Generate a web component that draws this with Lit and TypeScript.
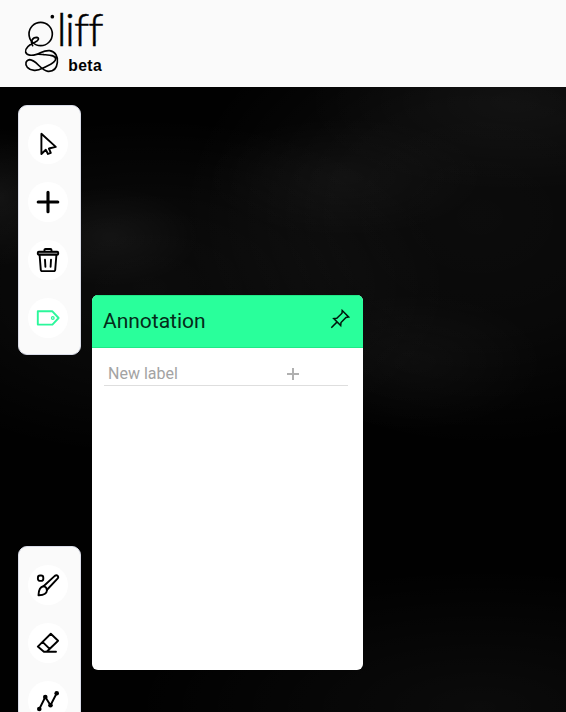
import { LitElement, html, css, svg } from "lit";
import { customElement } from "lit/decorators.js";

const icons = {
  select: svg`<path d="M5.4 1.8V22l4.4-4.2 2.2 4.2 2.8-1.2-1.9-4.3 6.9-1.6z" />`,
  add: svg`<path d="M2.2 12h19.6M12 2.2v19.6" stroke-width="3.1" />`,
  trash: svg`<path d="M8.5 3.5V1.9q0-.9 1-.9h5q1 0 1 .9v1.6" />
    <rect x="1.8" y="3.8" width="20.4" height="2.9" rx="1" fill="#999" />
    <path d="M3.6 7l1.2 14.8q.2 1.4 1.5 1.4h11.4q1.3 0 1.5-1.4L20.4 7" />
    <path d="M9 11.8l.4 7M15 11.8l-.4 7" />`,
  tag: svg`<path d="M1.8 5.3h14.6l6.2 6.7-6.2 6.6H1.8z" /><circle cx="16.8" cy="12" r="1.3" stroke-width="1.3" />`,
  brush: svg`<rect x="1.9" y="2.5" width="5.4" height="5.4" rx="2.2" />
    <path d="M7.5 13.2L18.8 2.9q1.7-1.2 2.9 0 1.1 1.4-.2 2.8L10.8 17" />
    <path d="M7.5 13.2q3 .8 3.6 3.8-.6 5.4-8.6 5.2Q2.7 14 7.5 13.2z" />`,
  eraser: svg`<path d="M14.8 2.8l7.3 6.9-11.4 11H7.9l-6.1-5.1zM6.5 10.8l6.9 6.9M7.9 20.8H20" />`,
  spline: svg`<path d="M3.3 20L9.3 8l5.2 8.3 6.2-12" />
    <g fill="currentColor" stroke="none"><circle cx="3.3" cy="20" r="2.3" /><circle cx="9.3" cy="8" r="2.3" />
    <circle cx="14.5" cy="16.3" r="2.3" /><circle cx="20.7" cy="4.3" r="2.3" /></g>`,
};

type IconName = keyof typeof icons;

@customElement("app-root")
export class AppRoot extends LitElement {
  static styles = css`
    :host {
      display: flex;
      flex-direction: column;
      width: 100%;
      height: 100vh;
      overflow: hidden;
      font-family: Roboto, sans-serif;
    }
    .header { flex: 0 0 87px; background: #fafafa; }
    .logo { display: block; width: 110px; height: 86px; margin-left: 10px; }
    .wordmark {
      font-family: Lato, sans-serif;
      font-weight: 300;
      font-size: 134px;
      stroke: #000;
      stroke-width: 1.5px;
    }
    .beta { font-family: "Liberation Sans", sans-serif; font-weight: 700; font-size: 47px; }
    .workspace {
      flex: 1;
      min-height: 0;
      display: flex;
      align-items: flex-start;
      gap: 11px;
      padding: 18px 0 0 18px;
      overflow: hidden;
      background:
        radial-gradient(ellipse 90px 50px at 110px 150px, #ffffff0b, transparent),
        radial-gradient(ellipse 60px 70px at 0 110px, #ffffff0f, transparent),
        radial-gradient(ellipse 140px 60px at 345px 90px, #ffffff09, transparent),
        radial-gradient(ellipse 210px 90px at 515px 15px, #ffffff0a, transparent),
        radial-gradient(ellipse 130px 70px at 415px 275px, #ffffff08, transparent),
        radial-gradient(ellipse 300px 230px at 480px 130px, #ffffff0b, #ffffff08 50%, transparent),
        radial-gradient(ellipse 300px 170px at 150px 200px, #ffffff0b, #ffffff07 50%, transparent),
        radial-gradient(ellipse 350px 140px at 480px 620px, #ffffff0a, transparent),
        #010101;
    }
    .tools { display: flex; flex-direction: column; gap: 191px; }
    .toolbar {
      box-sizing: border-box;
      width: 63px;
      height: 250px;
      flex: none;
      display: flex;
      flex-direction: column;
      gap: 18px;
      padding: 18px 9px 0;
      background: #fafafa;
      border: 1px solid #dadde9;
      border-radius: 9px;
    }
    .tool {
      flex: none;
      width: 40px;
      height: 40px;
      padding: 0;
      border: 0;
      border-radius: 50%;
      background: #fff;
      color: #000;
      display: grid;
      place-items: center;
    }
    .tool.active { color: #2bf79b; }
    .icon {
      width: 24px;
      height: 24px;
      fill: none;
      stroke: currentColor;
      stroke-width: 1.9;
      stroke-linecap: round;
      stroke-linejoin: round;
    }
    .panel {
      width: 271px;
      height: 375px;
      margin-top: 190px;
      background: #fff;
      border-radius: 6px;
      overflow: hidden;
    }
    .panel-head {
      box-sizing: border-box;
      height: 53px;
      display: flex;
      align-items: center;
      justify-content: space-between;
      padding: 0 13px 0 11px;
      background: #29ff9b;
      border: 1px solid #20e887;
      border-left: 0;
      border-right: 0;
      color: #042b19;
    }
    .title { font-size: 21px; line-height: 24px; margin-top: -2px; letter-spacing: -0.02px; }
    .pin { width: 20px; height: 20px; margin-top: -6px; fill: none; stroke: #00170c; stroke-width: 1.5; }
    .field {
      display: flex;
      align-items: center;
      justify-content: space-between;
      height: 23px;
      margin: 14px 15px 0 12px;
      padding: 0 49px 0 4px;
      border-bottom: 1px solid #dedede;
      color: #a3a3a3;
      font-size: 16px;
    }
    .plus { width: 12px; height: 12px; margin-top: 1px; stroke: #b0b0b0; stroke-width: 2; }
  `;

  private tool(name: IconName, label: string, active = false) {
    return html`<button class="tool ${active ? "active" : ""}" aria-label=${label}>
      <svg class="icon" viewBox="0 0 24 24">${icons[name]}</svg>
    </button>`;
  }

  render() {
    return html`
      <header class="header">
        <svg class="logo" viewBox="0 0 330 258">
          <g fill="none" stroke="#000" stroke-width="5" stroke-linecap="round" stroke-linejoin="round">
            <circle cx="92" cy="102" r="35" />
            <path d="M68 137C60 126 67 112 80 112C89 113 86 121 76 126C60 133 45 144 47 156C50 168 66 167 80 163C94 158 104 150 119 152C136 155 145 170 142 188C140 205 130 215 114 214C91 211 80 180 59 179C47 181 44 192 52 202C62 213 82 214 97 205C112 196 137 190 137 177C137 165 116 165 102 164C92 163 86 162 79 163" />
          </g>
          <circle cx="127" cy="50" r="5.5" />
          <text class="wordmark" x="140 165 192 235" y="138">liff</text>
          <text class="beta" x="175" y="214" textLength="100">beta</text>
        </svg>
      </header>
      <main class="workspace">
        <div class="tools">
          <nav class="toolbar">
            ${this.tool("select", "Select")} ${this.tool("add", "Add")}
            ${this.tool("trash", "Delete")} ${this.tool("tag", "Annotation", true)}
          </nav>
          <nav class="toolbar">
            ${this.tool("brush", "Brush")} ${this.tool("eraser", "Eraser")} ${this.tool("spline", "Spline")}
          </nav>
        </div>
        <section class="panel">
          <div class="panel-head">
            <span class="title">Annotation</span>
            <svg class="pin" viewBox="0 0 20 20">
              <path d="M1.3 18.7l5.6-5.6M12.2 1.5l6.4 6.4-2.6.5-5 5.2-.3 2.9-6.9-6.9 3-.3 5.2-5.1z" />
            </svg>
          </div>
          <div class="field">
            <span>New label</span>
            <svg class="plus" viewBox="0 0 12 12"><path d="M0 6h12M6 0v12" /></svg>
          </div>
        </section>
      </main>
    `;
  }
}
